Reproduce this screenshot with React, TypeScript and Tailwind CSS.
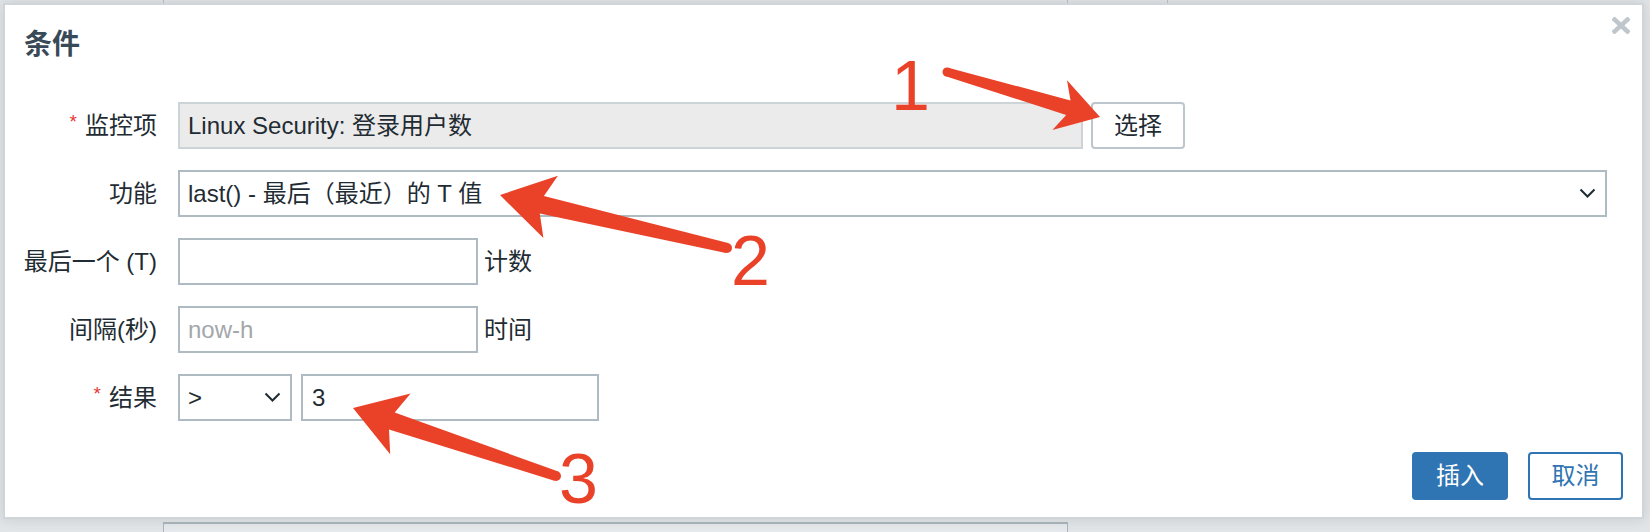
import React from 'react';

type Pt = [number, number];

const FONT = "font-['Liberation_Sans','Noto_Sans_CJK_SC',sans-serif]";

// 批注箭头的轮廓：尾部细，头部带倒钩
function arrowShape(tail: Pt, tip: Pt, tailW: number, neckW: number, headLen: number, headHalf: number, notch = 9) {
  const dx = tip[0] - tail[0];
  const dy = tip[1] - tail[1];
  const len = Math.hypot(dx, dy);
  const ux = dx / len;
  const uy = dy / len;
  const px = -uy;
  const py = ux;
  const bx = tip[0] - ux * headLen;
  const by = tip[1] - uy * headLen;
  const nx = bx + ux * notch;
  const ny = by + uy * notch;
  const p = (x: number, y: number) => `${x.toFixed(1)},${y.toFixed(1)}`;
  const r = tailW / 2;
  return [
    p(tail[0] + px * r, tail[1] + py * r),
    p(nx + (px * neckW) / 2, ny + (py * neckW) / 2),
    p(bx + px * headHalf, by + py * headHalf),
    p(tip[0], tip[1]),
    p(bx - px * headHalf, by - py * headHalf),
    p(nx - (px * neckW) / 2, ny - (py * neckW) / 2),
    p(tail[0] - px * r, tail[1] - py * r),
  ].join(' ');
}

const arrows: { tail: Pt; tip: Pt; tailW: number; neckW: number; headLen: number; headHalf: number }[] = [
  { tail: [947, 72], tip: [1100, 117], tailW: 9, neckW: 15, headLen: 42, headHalf: 26 },
  { tail: [727, 248], tip: [500, 195], tailW: 10, neckW: 18, headLen: 52, headHalf: 32 },
  { tail: [556, 476], tip: [353, 408], tailW: 10, neckW: 18, headLen: 50, headHalf: 32 },
];

const Chevron = () => (
  <svg width="17" height="11" viewBox="0 0 17 11">
    <path d="M1.5 1.5 L8.5 8.5 L15.5 1.5" fill="none" stroke="#1f2c33" strokeWidth="2" />
  </svg>
);

/** 表单行：左侧标签右对齐，右侧控件 */
const Row: React.FC<{ label: string; required?: boolean; children: React.ReactNode }> = ({ label, required, children }) => (
  <div className="flex h-[47px]">
    <div className="w-[152px] flex items-center justify-end">
      {required && <span className="text-[#e33734] text-[19px] leading-none mr-[8px] -mt-[8px]">*</span>}
      <span className="leading-none">{label}</span>
    </div>
    <div className="ml-[21px] flex items-stretch">{children}</div>
  </div>
);

export default function App() {
  return (
    <div className={`relative w-[1650px] h-[532px] overflow-hidden bg-[#e2e5e8] text-[#1f2c33] text-[24px] flex flex-col justify-between ${FONT}`}>
      {/* 背景页面的残留部分 */}
      <div className="h-[3px] flex">
        <div className="ml-[163px] w-[905px] border-x border-[#b9c3c9]" />
        <div className="w-[100px] border-r border-[#b9c3c9]" />
      </div>
      <div className="ml-[163px] w-[905px] h-[10px] border-t-2 border-x border-[#aab6bd] bg-[#e6e9eb]" />

      {/* 弹窗 */}
      <div className="absolute left-[3px] top-[3px] w-[1641px] h-[516px] bg-white border-2 border-[#cfd5d9] shadow-[0_0_12px_rgba(0,0,0,0.12)] flex flex-col">
        <div className="pt-[26px] pl-[19px] text-[28px] leading-[28px] font-bold text-[#384a57]">条件</div>
        <button className="absolute right-[12px] top-[12px]">
          <svg width="18" height="17" viewBox="0 0 18 17">
            <path d="M2.5 2.5 L15.5 14.5 M15.5 2.5 L2.5 14.5" stroke="#c0c7cc" strokeWidth="4.5" strokeLinecap="square" />
          </svg>
        </button>

        <div className="mt-[43px] flex flex-col gap-[21px]">
          <Row label="监控项" required>
            <div className="w-[905px] bg-[#ebebeb] border-2 border-[#cdd4d8] flex items-center pl-[8px] leading-none">
              Linux Security: 登录用户数
            </div>
            <button className="ml-[8px] w-[94px] border-2 border-[#bcc6cc] rounded-[4px] bg-white leading-none">选择</button>
          </Row>
          <Row label="功能">
            <div className="w-[1429px] border-2 border-[#aebbc3] flex items-center justify-between pl-[8px] pr-[9px] leading-none">
              <span>last() - 最后（最近）的 T 值</span>
              <Chevron />
            </div>
          </Row>
          <Row label="最后一个 (T)">
            <div className="w-[300px] border-2 border-[#aebbc3]" />
            <span className="ml-[6px] self-center leading-none">计数</span>
          </Row>
          <Row label="间隔(秒)">
            <div className="w-[300px] border-2 border-[#aebbc3] flex items-center pl-[8px] text-[#a3a7aa] leading-none">now-h</div>
            <span className="ml-[6px] self-center leading-none">时间</span>
          </Row>
          <Row label="结果" required>
            <div className="w-[114px] border-2 border-[#aebbc3] flex items-center justify-between pl-[8px] pr-[9px] leading-none">
              <span>&gt;</span>
              <Chevron />
            </div>
            <div className="ml-[9px] w-[298px] border-2 border-[#aebbc3] flex items-center pl-[9px] leading-none">3</div>
          </Row>
        </div>

        <div className="mt-[31px] flex justify-end gap-[20px] pr-[19px]">
          <button className="w-[96px] h-[48px] rounded-[4px] bg-[#2f74b3] text-white leading-none">插入</button>
          <button className="w-[95px] h-[48px] rounded-[4px] border-2 border-[#2f74b3] bg-white text-[#2f74b3] leading-none">取消</button>
        </div>
      </div>

      {/* 红色批注 */}
      <svg className="absolute inset-0 pointer-events-none" width="1650" height="532">
        {arrows.map((a, i) => (
          <g key={i} fill="#ea4228">
            <polygon points={arrowShape(a.tail, a.tip, a.tailW, a.neckW, a.headLen, a.headHalf)} />
            <circle cx={a.tail[0]} cy={a.tail[1]} r={a.tailW / 2} />
          </g>
        ))}
      </svg>
      <span className="absolute left-[891px] top-[51px] text-[70px] leading-none text-[#ea4228] font-['Liberation_Sans',sans-serif]">1</span>
      <span className="absolute left-[731px] top-[226px] text-[70px] leading-none text-[#ea4228] font-['Liberation_Sans',sans-serif]">2</span>
      <span className="absolute left-[559px] top-[444px] text-[70px] leading-none text-[#ea4228] font-['Liberation_Sans',sans-serif]">3</span>
    </div>
  );
}
